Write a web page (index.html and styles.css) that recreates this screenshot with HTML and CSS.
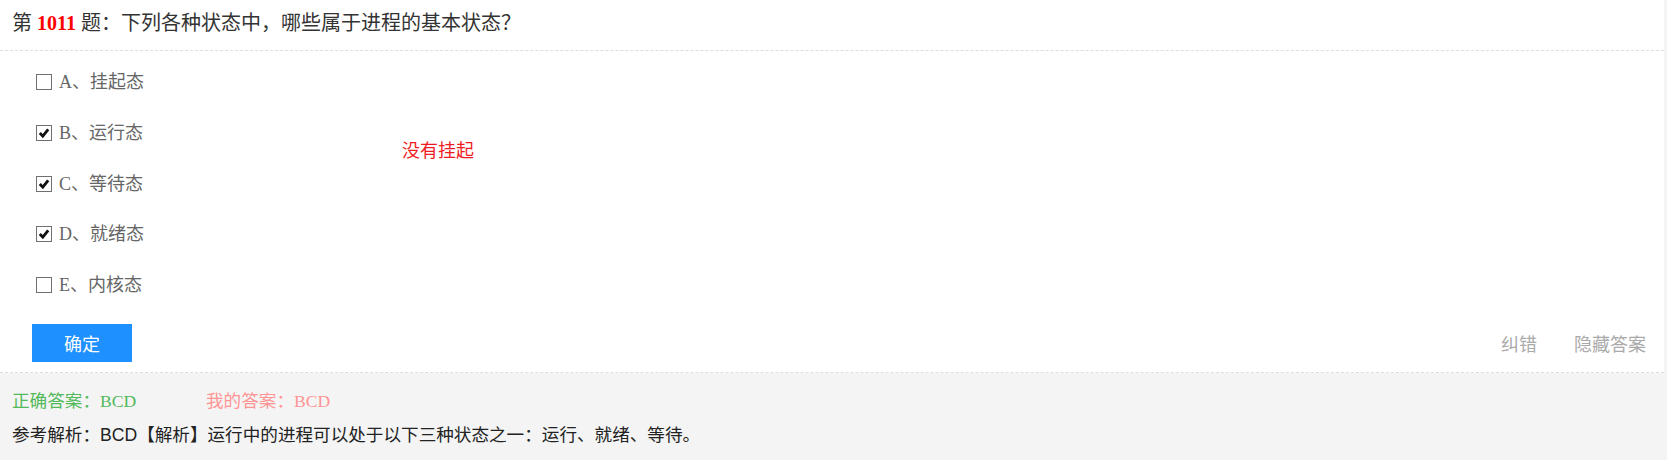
FILE: index.html
```html
<!DOCTYPE html>
<html lang="zh-CN">
<head>
<meta charset="utf-8">
<title>第1011题</title>
<link rel="stylesheet" href="styles.css">
</head>
<body>
<div class="card">
  <div class="q-head">第 <b class="num">1011</b> 题：下列各种状态中，哪些属于进程的基本状态？</div>
  <div class="q-body">
    <ul class="options">
      <li class="opt"><span class="box"></span><span class="opt-text">A、挂起态</span></li>
      <li class="opt"><span class="box"><svg viewBox="0 0 14 14" width="14" height="14"><path d="M2.8 7 L5.8 10.2 L11.2 3.4" fill="none" stroke="#111" stroke-width="2.8"/></svg></span><span class="opt-text">B、运行态</span></li>
      <li class="opt"><span class="box"><svg viewBox="0 0 14 14" width="14" height="14"><path d="M2.8 7 L5.8 10.2 L11.2 3.4" fill="none" stroke="#111" stroke-width="2.8"/></svg></span><span class="opt-text">C、等待态</span></li>
      <li class="opt"><span class="box"><svg viewBox="0 0 14 14" width="14" height="14"><path d="M2.8 7 L5.8 10.2 L11.2 3.4" fill="none" stroke="#111" stroke-width="2.8"/></svg></span><span class="opt-text">D、就绪态</span></li>
      <li class="opt"><span class="box"></span><span class="opt-text">E、内核态</span></li>
    </ul>
    <div class="note">没有挂起</div>
  </div>
  <div class="q-foot">
    <button class="btn">确定</button>
    <div class="links">
      <span class="link">纠错</span>
      <span class="link">隐藏答案</span>
    </div>
  </div>
  <div class="analysis">
    <div class="ans-row">
      <span class="right-ans">正确答案：BCD</span>
      <span class="my-ans">我的答案：BCD</span>
    </div>
    <div class="explain">参考解析：<span class="latin">BCD</span>【解析】运行中的进程可以处于以下三种状态之一：运行、就绪、等待。</div>
  </div>
</div>
</body>
</html>
```

FILE: styles.css
```css
html, body {
  margin: 0;
  padding: 0;
}
body {
  background: #f4f4f4;
  font-family: "Liberation Serif", "Noto Sans CJK SC", serif;
  color: #333;
}
.card {
  width: 1664px;
  background: #fff;
}
.q-head {
  height: 50px;
  line-height: 46px;
  padding: 0 12px;
  font-size: 20px;
  color: #333;
  border-bottom: 1px dashed #ddd;
}
.num {
  color: #f00;
  font-weight: bold;
}
.q-body {
  display: flex;
  padding: 18px 0 0 36px;
}
.options {
  list-style: none;
  margin: 0;
  padding: 0;
  width: 366px;
  display: flex;
  flex-direction: column;
  gap: 24.75px;
}
.opt {
  display: flex;
  align-items: center;
  height: 26px;
  font-size: 18px;
  color: #666;
}
.box {
  width: 14px;
  height: 14px;
  border: 1px solid #707070;
  background: #fff;
  display: flex;
  align-items: center;
  justify-content: center;
  margin-right: 7px;
  flex: none;
}
.box svg {
  display: block;
}
.opt-text {
  line-height: 26px;
}
.note {
  margin-top: 67px;
  line-height: 26px;
  height: 26px;
  font-size: 18px;
  color: #f01c24;
  font-family: "Noto Sans CJK SC", sans-serif;
}
.q-foot {
  display: flex;
  align-items: center;
  justify-content: space-between;
  padding: 26px 18px 10px 32px;
  border-bottom: 1px dashed #ddd;
}
.btn {
  width: 100px;
  height: 38px;
  border: none;
  background: #1e90ff;
  color: #fff;
  font-size: 18px;
  font-family: "Noto Sans CJK SC", sans-serif;
  padding: 0;
  cursor: pointer;
}
.links {
  display: flex;
  gap: 37px;
}
.link {
  font-size: 18px;
  color: #aaa;
  font-family: "Noto Sans CJK SC", sans-serif;
}
.analysis {
  background: #f4f4f4;
  padding: 11px 12px 8px;
  font-size: 17.6px;
}
.ans-row {
  line-height: 34px;
  height: 34px;
  display: flex;
}
.right-ans {
  color: #52b95a;
  width: 194px;
}
.my-ans {
  color: #ff9494;
}
.explain {
  line-height: 34px;
  color: #222;
}
.latin {
  font-family: "Liberation Sans Narrow", "Liberation Sans", sans-serif;
}
```
